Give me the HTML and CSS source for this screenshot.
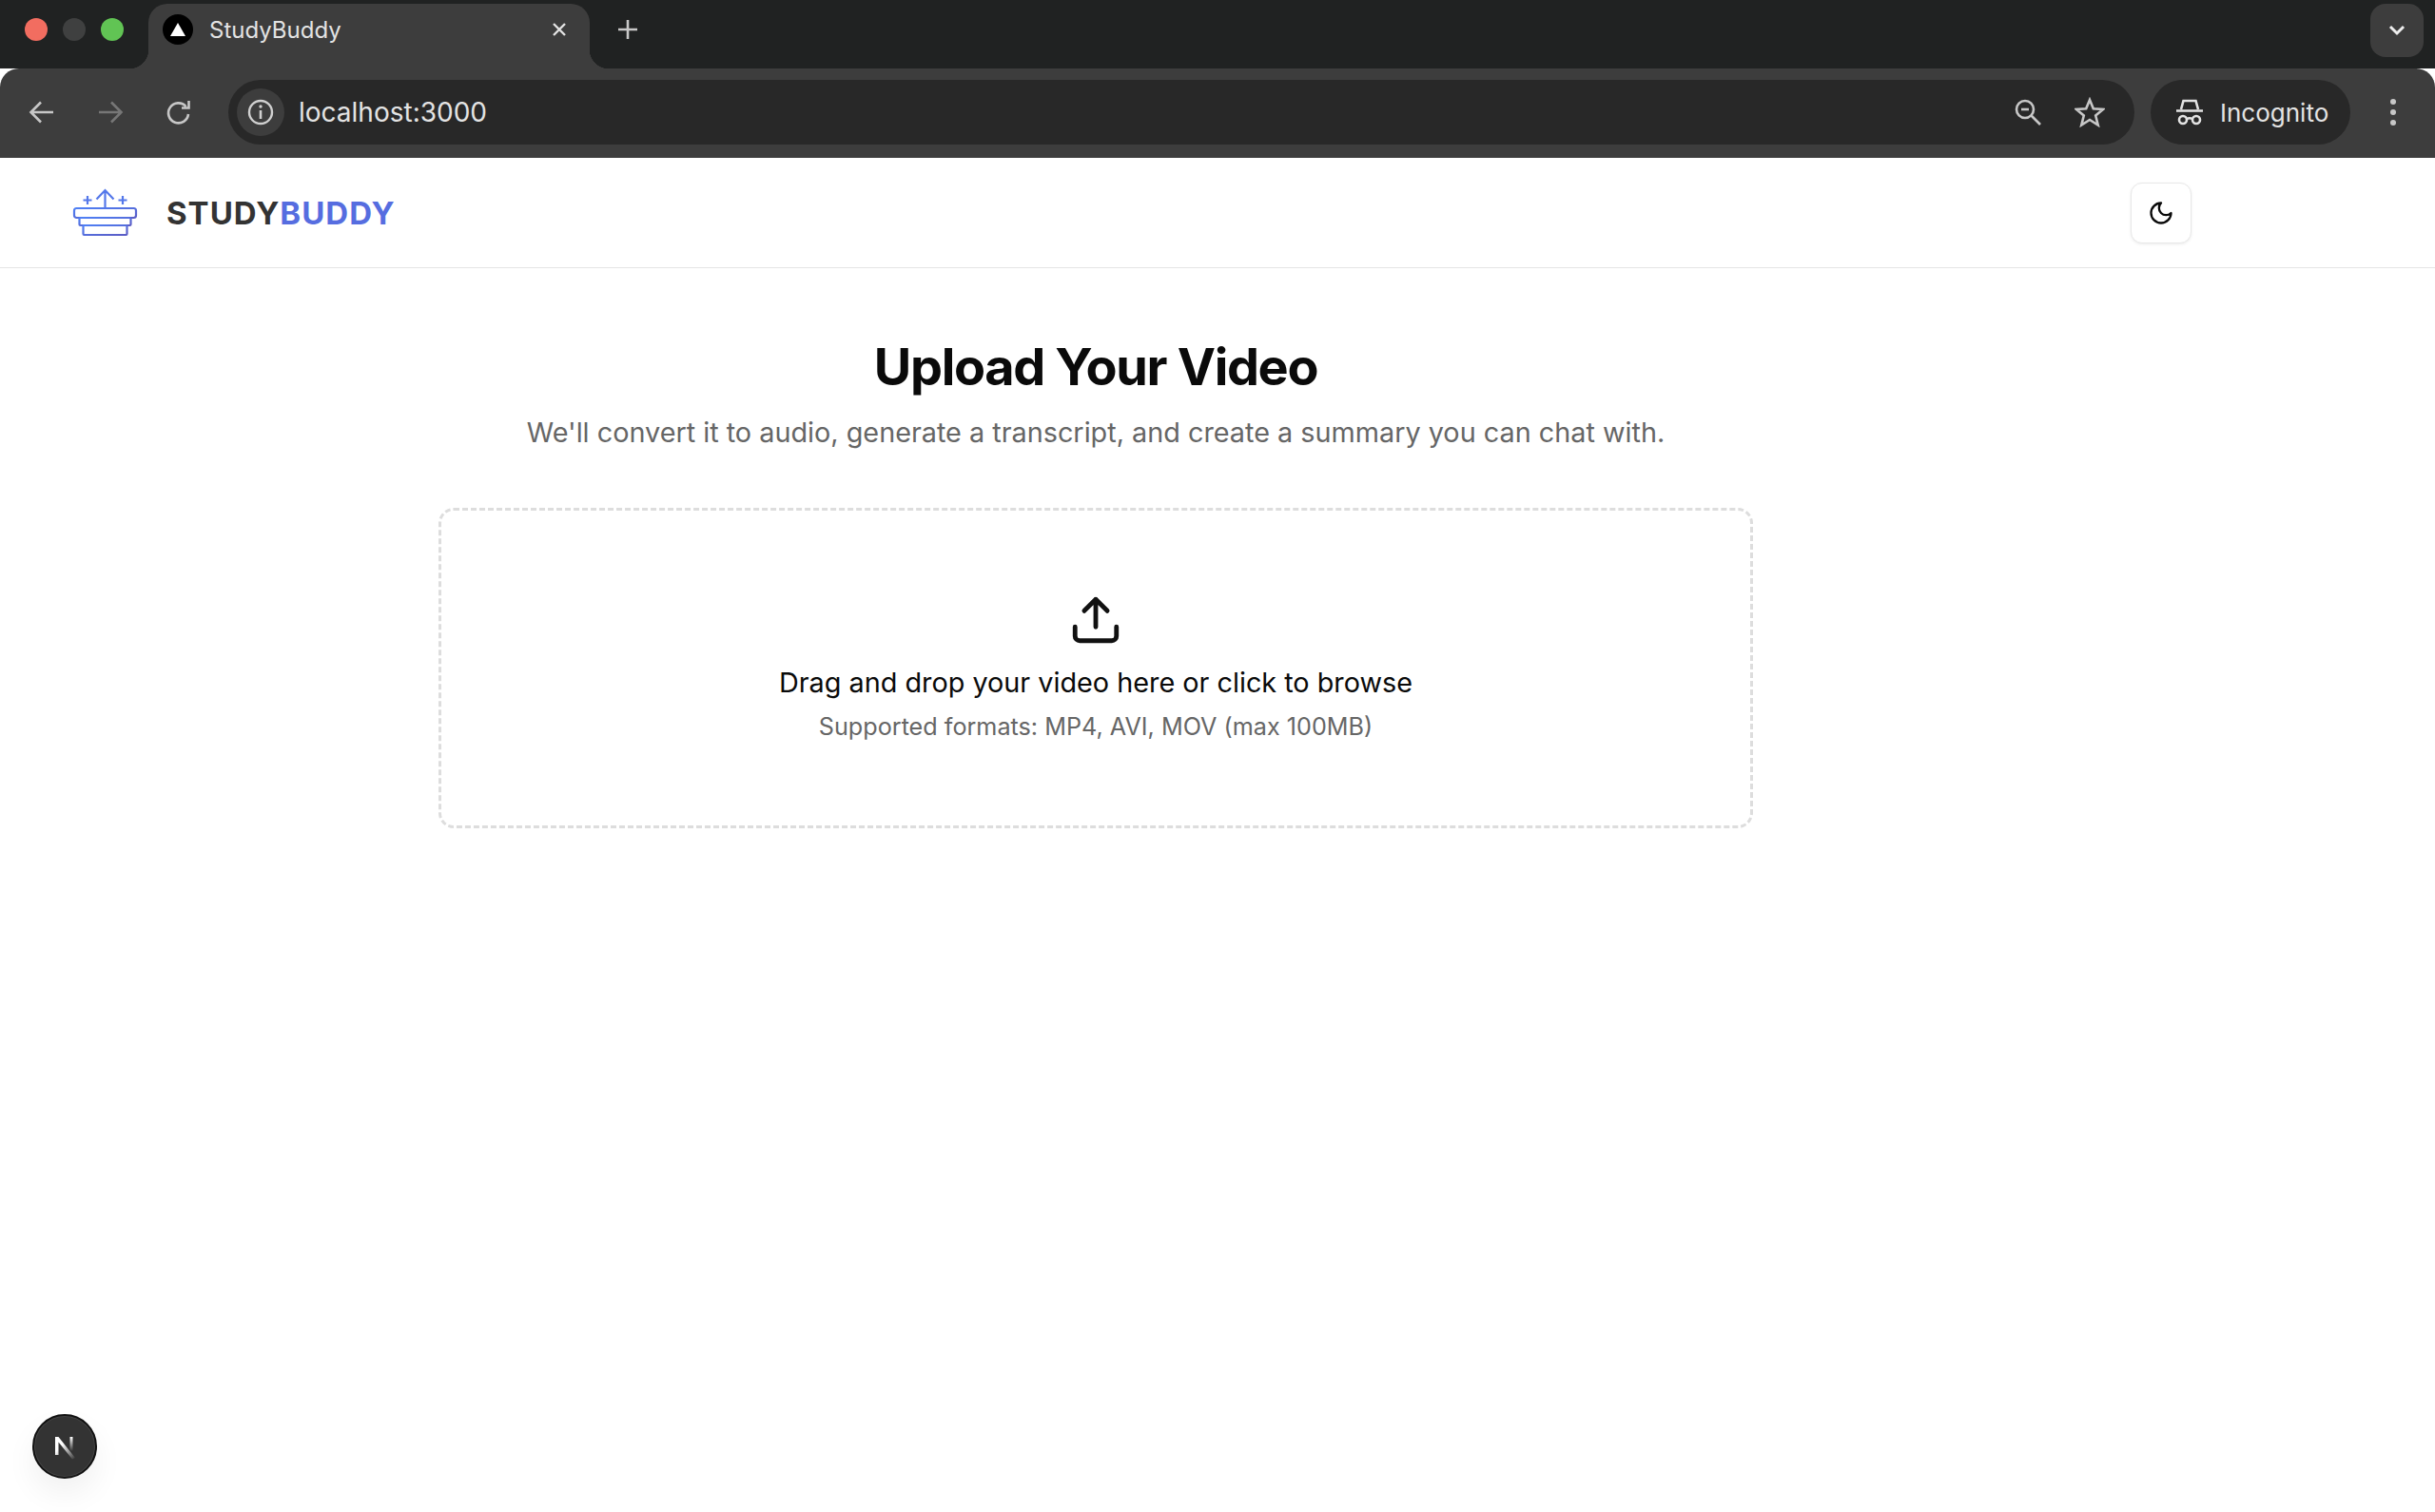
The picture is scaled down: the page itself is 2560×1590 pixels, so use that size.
FILE: index.html
```html
<!DOCTYPE html>
<html lang="en">
<head>
    <meta charset="UTF-8">
    <meta name="viewport" content="width=device-width, initial-scale=1.0">
    <title>StudyBuddy</title>
    <link rel="stylesheet" href="styles.css">
</head>
<body>
    <div class="tabstrip">
        <div class="lights">
            <span class="light red"></span>
            <span class="light grey"></span>
            <span class="light green"></span>
        </div>
        <div class="tab">
            <span class="favicon"><svg width="16" height="14" viewBox="0 0 16 14"><path d="M8 0 L16 14 H0 Z" fill="#fff"/></svg></span>
            <span class="tab-title">StudyBuddy</span>
            <svg class="tab-close" width="16" height="16" viewBox="0 0 16 16"><path d="M2 2 L14 14 M14 2 L2 14" stroke="#e3e3e3" stroke-width="2.4" fill="none"/></svg>
        </div>
        <svg class="new-tab" width="24" height="24" viewBox="0 0 24 24"><path d="M12 2 V22 M2 12 H22" stroke="#c8c8c8" stroke-width="2.6" fill="none"/></svg>
        <div class="tab-search">
            <svg width="18" height="12" viewBox="0 0 18 12"><path d="M2 2 L9 9 L16 2" stroke="#eee" stroke-width="3" fill="none"/></svg>
        </div>
    </div>

    <div class="toolbar">
        <svg class="nav-icon" width="30" height="30" viewBox="0 0 30 30"><path d="M27 15 H5 M14 4.500 L3.500 15 L14 25.500" stroke="#c7c7c7" stroke-width="2.6" fill="none"/></svg>
        <svg class="nav-icon" width="30" height="30" viewBox="0 0 30 30"><path d="M3 15 H25 M16 4.500 L26.500 15 L16 25.500" stroke="#777" stroke-width="2.6" fill="none"/></svg>
        <svg class="nav-icon" width="30" height="30" viewBox="0 0 30 30"><path d="M25 17 A10.500 10.500 0 1 1 22.500 9 M25.500 3 V10.500 H18" stroke="#c7c7c7" stroke-width="2.6" fill="none"/></svg>
        <div class="omnibox">
            <span class="site-info">
                <svg width="30" height="30" viewBox="0 0 30 30"><circle cx="15" cy="15" r="12" stroke="#d0d0d0" stroke-width="2.4" fill="none"/><path d="M15 13 V22" stroke="#d0d0d0" stroke-width="2.6"/><circle cx="15" cy="9" r="1.7" fill="#d0d0d0"/></svg>
            </span>
            <span class="url">localhost:3000</span>
            <svg class="omni-icon zoom-icon" width="30" height="30" viewBox="0 0 30 30"><circle cx="12" cy="12" r="9" stroke="#c7c7c7" stroke-width="2.6" fill="none"/><path d="M18.500 18.500 L28 28" stroke="#c7c7c7" stroke-width="2.600"/><path d="M8 12 H16" stroke="#c7c7c7" stroke-width="2.600"/></svg>
            <svg class="omni-icon" width="32" height="32" viewBox="0 0 32 32"><path d="M16 3 L19.800 12.200 L30 13 L22.200 19.500 L24.700 29.500 L16 24 L7.300 29.500 L9.800 19.500 L2 13 L12.200 12.200 Z" stroke="#c7c7c7" stroke-width="2.600" fill="none"/></svg>
        </div>
        <div class="incognito">
            <svg width="30" height="28" viewBox="0 0 30 28"><path d="M1 12.500 H29 M6 11 L8.500 2 H21.500 L24 11" stroke="#e3e3e3" stroke-width="2.600" fill="none"/><circle cx="8" cy="22" r="4" stroke="#e3e3e3" stroke-width="2.600" fill="none"/><circle cx="22" cy="22" r="4" stroke="#e3e3e3" stroke-width="2.600" fill="none"/><path d="M12 21 Q15 19.500 18 21" stroke="#e3e3e3" stroke-width="2.400" fill="none"/></svg>
            <span>Incognito</span>
        </div>
        <div class="kebab"><i></i><i></i><i></i></div>
    </div>

    <div class="page">
        <header class="site-header">
            <div class="header-inner">
                <div class="brand">
                    <svg class="brand-logo" width="70" height="52" viewBox="0 0 70 52">
                        <defs>
                            <linearGradient id="logoGrad" x1="0" y1="0" x2="1" y2="1">
                                <stop offset="0" stop-color="#4f80f5"/>
                                <stop offset="1" stop-color="#5b5cc4"/>
                            </linearGradient>
                        </defs>
                        <g stroke="url(#logoGrad)" stroke-width="2.200" fill="none" stroke-linejoin="round">
                            <rect x="2" y="21" width="65" height="10" rx="2.500"/>
                            <rect x="7.500" y="31" width="54" height="8" rx="1"/>
                            <rect x="11.500" y="39" width="46" height="10" rx="1"/>
                        </g>
                        <path d="M34.500 21 V2 M25.500 11.500 L34.500 2 L43.500 11.500 M16 8 V17 M11.500 12.500 H20.500 M53 8 V17 M48.500 12.500 H57.500" stroke="#5578ea" stroke-width="2.200" fill="none"/>
                    </svg>
                    <span class="brand-name">STUDY<span class="brand-accent">BUDDY</span></span>
                </div>
                <button class="theme-btn" type="button">
                    <svg width="28" height="28" viewBox="0 0 24 24"><path d="M12 3 a6 6 0 0 0 9 9 9 9 0 1 1 -9 -9 Z" stroke="#0a0a0a" stroke-width="2" fill="none" stroke-linejoin="round"/></svg>
                </button>
            </div>
        </header>

        <main class="content">
            <h1>Upload Your Video</h1>
            <p class="lead">We'll convert it to audio, generate a transcript, and create a summary you can chat with.</p>
            <div class="dropzone">
                <svg class="upload-icon" width="58" height="58" viewBox="0 0 24 24"><path d="M21 15 v4 a2 2 0 0 1 -2 2 H5 a2 2 0 0 1 -2 -2 v-4 M17 8 L12 3 L7 8 M12 3 V15" stroke="#111" stroke-width="2" fill="none" stroke-linecap="round" stroke-linejoin="round"/></svg>
                <p class="drop-title">Drag and drop your video here or click to browse</p>
                <p class="drop-hint">Supported formats: MP4, AVI, MOV (max 100MB)</p>
            </div>
        </main>

        <div class="dev-badge">
            <svg width="30" height="30" viewBox="0 0 30 30">
                <defs>
                    <linearGradient id="nA" x1="0" y1="0" x2="1" y2="1">
                        <stop offset="0.350" stop-color="#fff"/>
                        <stop offset="1" stop-color="#fff" stop-opacity="0"/>
                    </linearGradient>
                    <linearGradient id="nB" x1="0" y1="0" x2="0" y2="1">
                        <stop offset="0" stop-color="#fff"/>
                        <stop offset="1" stop-color="#fff" stop-opacity="0"/>
                    </linearGradient>
                </defs>
                <path d="M5 24 V5 H8.500 L26 27 L23 28.500 L8.500 10.500 V24 Z" fill="url(#nA)"/>
                <rect x="20.500" y="5" width="3" height="15" fill="url(#nB)"/>
            </svg>
        </div>
    </div>
</body>
</html>
```

FILE: styles.css
```css
* {
    box-sizing: border-box;
}
html, body {
    margin: 0;
    height: 100%;
}
body {
    font-family: Inter, "Liberation Sans", sans-serif;
    background: #fff;
    display: flex;
    flex-direction: column;
    overflow: hidden;
}

/* browser chrome */
.tabstrip {
    height: 72px;
    background: #202222;
    display: flex;
    align-items: flex-start;
    flex: none;
}
.lights {
    display: flex;
    gap: 16px;
    padding: 19px 0 0 26px;
    width: 156px;
    flex: none;
}
.light {
    width: 24px;
    height: 24px;
    border-radius: 50%;
}
.red { background: #f26d60; }
.grey { background: #3f4040; }
.green { background: #61c454; }

.tab {
    position: relative;
    width: 464px;
    height: 68px;
    margin-top: 4px;
    background: #3d3d3d;
    border-radius: 20px 20px 0 0;
    display: flex;
    align-items: center;
    padding: 0 24px 0 15px;
    color: #e3e3e3;
    font-size: 24px;
}
.tab::before, .tab::after {
    content: "";
    position: absolute;
    bottom: 0;
    width: 20px;
    height: 20px;
}
.tab::before {
    left: -20px;
    background: radial-gradient(circle at 0 0, #202222 20px, #3d3d3d 20.5px);
}
.tab::after {
    right: -20px;
    background: radial-gradient(circle at 100% 0, #202222 20px, #3d3d3d 20.5px);
}
.favicon {
    width: 32px;
    height: 32px;
    border-radius: 50%;
    background: #000;
    display: flex;
    align-items: center;
    justify-content: center;
    flex: none;
}
.tab-title {
    margin-left: 17px;
    flex: 1;
    margin-bottom: 14px;
}
.favicon, .tab-close {
    margin-bottom: 14px;
}
.new-tab {
    margin: 19px 0 0 28px;
    flex: none;
}
.tab-search {
    margin: 4px 12px 0 auto;
    width: 56px;
    height: 56px;
    border-radius: 16px;
    background: #3d3d3d;
    display: flex;
    align-items: center;
    justify-content: center;
}

.toolbar {
    height: 94px;
    background: #3d3d3d;
    border-radius: 20px 20px 0 0;
    display: flex;
    align-items: flex-start;
    padding: 12px 0 0 29px;
    flex: none;
    position: relative;
}
.nav-icon {
    margin-top: 19px;
    margin-right: 42px;
    flex: none;
}
.omnibox {
    width: 2004px;
    height: 68px;
    margin-left: -5px;
    background: #282828;
    border-radius: 34px;
    display: flex;
    align-items: center;
    padding: 0 31px 0 9px;
    color: #e3e3e3;
}
.site-info {
    width: 50px;
    height: 50px;
    border-radius: 50%;
    background: #3d3d3d;
    display: flex;
    align-items: center;
    justify-content: center;
    flex: none;
}
.url {
    margin-left: 15px;
    font-size: 28px;
    flex: 1;
}
.omni-icon {
    flex: none;
}
.zoom-icon {
    margin-right: 34px;
}
.incognito {
    width: 210px;
    height: 68px;
    margin-left: 17px;
    background: #282828;
    border-radius: 34px;
    display: flex;
    align-items: center;
    gap: 17px;
    padding-left: 26px;
    color: #e3e3e3;
    font-size: 26px;
    flex: none;
}
.kebab {
    margin-left: 42px;
    margin-top: 20px;
    display: flex;
    flex-direction: column;
    gap: 5px;
}
.kebab i {
    width: 6px;
    height: 6px;
    border-radius: 50%;
    background: #c7c7c7;
}

/* app page */
.page {
    flex: 1;
    position: relative;
    background: #fff;
}
.site-header {
    height: 116px;
    border-bottom: 1px solid #e5e5e5;
}
.header-inner {
    width: 2304px;
    height: 100%;
    padding-left: 76px;
    display: flex;
    align-items: center;
    justify-content: space-between;
}
.brand {
    display: flex;
    align-items: center;
    gap: 29px;
}
.brand-logo {
    display: block;
}
.brand-name {
    font-size: 33px;
    font-weight: 700;
    color: #333;
    letter-spacing: 1px;
}
.brand-accent {
    color: #566de0;
}
.theme-btn {
    width: 64px;
    height: 64px;
    background: #fff;
    border: 1px solid #e8e8e8;
    border-radius: 12px;
    box-shadow: 0 1px 3px rgba(0, 0, 0, 0.08);
    display: flex;
    align-items: center;
    justify-content: center;
    padding: 0;
}

.content {
    width: 2304px;
    display: flex;
    flex-direction: column;
    align-items: center;
    padding-top: 69px;
}
h1 {
    margin: 0;
    font-size: 54px;
    line-height: 70px;
    font-weight: 700;
    letter-spacing: -1.35px;
    color: #0a0a0a;
}
.lead {
    margin: 14px 0 0;
    font-size: 28.8px;
    line-height: 40px;
    color: #666;
}
.dropzone {
    width: 1382px;
    height: 337px;
    margin-top: 59px;
    border: 3px dashed #ddd;
    border-radius: 16px;
    display: flex;
    flex-direction: column;
    align-items: center;
    padding-top: 86px;
}
.upload-icon {
    display: block;
}
.drop-title {
    margin: 19px 0 0;
    font-size: 28.8px;
    line-height: 36px;
    color: #0a0a0a;
}
.drop-hint {
    margin: 11px 0 0;
    font-size: 25.2px;
    line-height: 34px;
    color: #666;
}

.dev-badge {
    position: absolute;
    left: 34px;
    bottom: 35px;
    width: 68px;
    height: 68px;
    border-radius: 50%;
    background: #333;
    border: 2px solid #111;
    box-shadow: 0 0 0 1px #444 inset, 0 16px 32px rgba(0, 0, 0, 0.06);
    display: flex;
    align-items: center;
    justify-content: center;
}
```
